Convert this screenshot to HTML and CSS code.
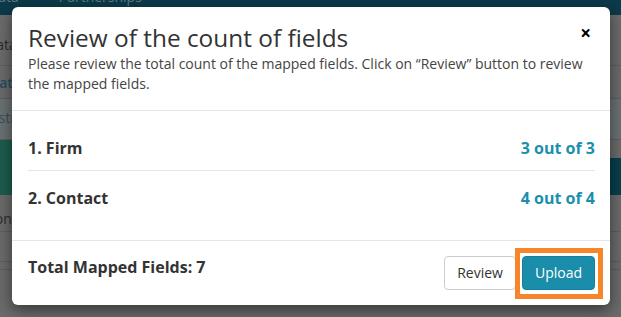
FILE: index.html
```html
<!DOCTYPE html>
<html lang="en">
<head>
  <meta charset="UTF-8">
  <title>Review of the count of fields</title>
  <link rel="stylesheet" href="styles.css">
</head>
<body>
  <!-- Page behind the dialog (dimmed) -->
  <div class="page">
    <div class="topbar">
      <span class="nav-item">Data</span>
      <span class="nav-item">Partnerships</span>
    </div>
    <div class="rows">
      <div class="row row-a"><span>Data</span></div>
      <div class="row row-b"><span class="link">Status</span></div>
      <div class="row row-c"><span class="muted">Instructions</span></div>
      <div class="row row-band"></div>
      <div class="row row-d"><span>Content</span></div>
      <div class="row row-e"></div>
      <div class="row row-f"></div>
    </div>
  </div>

  <!-- Dialog -->
  <div class="modal">
    <div class="modal-header">
      <button type="button" class="close">&times;</button>
      <h2 class="modal-title">Review of the count of fields</h2>
      <p class="modal-sub">Please review the total count of the mapped fields. Click on “Review” button to review the mapped fields.</p>
    </div>

    <div class="modal-body">
      <div class="count-row">
        <span>1. Firm</span>
        <span class="count">3 out of 3</span>
      </div>
      <div class="count-row">
        <span>2. Contact</span>
        <span class="count">4 out of 4</span>
      </div>
    </div>

    <div class="modal-footer">
      <span class="total">Total Mapped Fields: 7</span>
      <div class="actions">
        <button type="button" class="btn btn-default">Review</button>
        <span class="highlight">
          <button type="button" class="btn btn-primary">Upload</button>
        </span>
      </div>
    </div>
  </div>
</body>
</html>
```

FILE: styles.css
```css
* {
  box-sizing: border-box;
}
html, body {
  margin: 0;
  width: 621px;
  height: 317px;
  overflow: hidden;
}
body {
  font-family: "Open Sans", Arial, sans-serif;
  color: #333;
  background-color: #6b6b6b;
}

/* dimmed page */
.topbar {
  height: 15px;
  background: #0c3a49;
  display: flex;
  gap: 40px;
  margin-left: -12px;
  overflow: hidden;
}
.nav-item {
  font-size: 14px;
  line-height: 14px;
  margin-top: -10px;
  color: #5d7c86;
}
.row {
  border-bottom: 1px solid #5e5e5e;
  font-size: 14px;
  color: #2c2c2c;
  text-indent: -14px;
}
.row-a { height: 51px; padding-top: 20px; }
.row-b { height: 33px; padding-top: 7px; }
.row-b .link { color: #1f4d60; font-weight: 600; }
.row-c { height: 41px; padding-top: 9px; background: #6b7172; }
.row-c .muted { color: #3b4f57; }
.row-band {
  height: 55px;
  background: linear-gradient(90deg, #1d5c4e 0, #1d5c4e 50%, transparent 50%),
              linear-gradient(180deg, #6b6b6b 18px, #0a3e4d 18px);
  border-bottom: none;
}
.row-d { height: 37px; padding-top: 14px; }
.row-e { height: 30px; }
.row-f { height: 8px; }

/* dialog */
.modal {
  position: absolute;
  left: 12px;
  top: 7px;
  width: 598px;
  background: #fff;
  border-radius: 6px;
  box-shadow: 0 5px 15px rgba(0,0,0,0.5);
}
.modal-header {
  position: relative;
  padding: 18px 16px 16px;
  border-bottom: 1px solid #e5e5e5;
}
.modal-title {
  margin: 0;
  font-size: 24.4px;
  font-weight: 400;
  line-height: 26px;
  color: #333;
}
.modal-sub {
  margin: 3px 0 0;
  font-size: 14px;
  line-height: 20px;
  color: #444;
}
.close {
  position: absolute;
  top: 17px;
  right: 19px;
  padding: 0;
  border: none;
  background: none;
  font-family: "Open Sans", Arial, sans-serif;
  font-size: 19px;
  font-weight: 700;
  line-height: 1;
  color: #000;
  cursor: pointer;
}
.modal-body {
  padding: 10px 15px 20px 16px;
}
.count-row {
  display: flex;
  justify-content: space-between;
  padding: 16px 0 11px;
  font-size: 16px;
  font-weight: 700;
  line-height: 22px;
}
.count-row + .count-row {
  border-top: 1px solid #e5e5e5;
}
.count {
  color: #1b8fad;
}
.modal-footer {
  display: flex;
  justify-content: space-between;
  align-items: flex-start;
  padding: 15px 15px 15px 16px;
  border-top: 1px solid #e5e5e5;
}
.total {
  font-size: 16px;
  font-weight: 700;
  line-height: 22px;
}
.actions {
  display: flex;
  gap: 6px;
}
.btn {
  display: block;
  font-family: "Open Sans", Arial, sans-serif;
  font-size: 14px;
  line-height: 20px;
  padding: 6px 12px;
  border-radius: 4px;
  border: 1px solid #ccc;
  cursor: pointer;
}
.btn-default {
  background: #fff;
  color: #333;
}
.btn-primary {
  background: #1a8dab;
  border-color: #177f9a;
  color: #fff;
}

/* annotation frame round the Upload button */
.highlight {
  position: relative;
  display: block;
}
.highlight::after {
  content: "";
  position: absolute;
  top: -8px;
  left: -7px;
  right: -8px;
  bottom: -9px;
  border: 5px solid #f7862b;
  pointer-events: none;
}
```
